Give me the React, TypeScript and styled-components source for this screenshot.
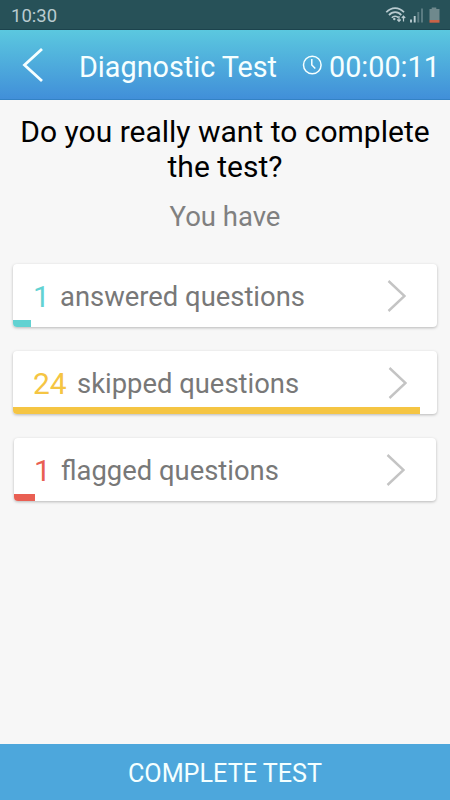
import React from 'react';
import styled, { createGlobalStyle } from 'styled-components';

const GlobalStyle = createGlobalStyle`
  * { box-sizing: border-box; }
  body { margin: 0; font-family: Roboto, "Liberation Sans", sans-serif; background: #f7f7f7; }
`;

const Screen = styled.div`
  display: flex;
  flex-direction: column;
  width: 450px;
  height: 800px;
  background: #f7f7f7;
  overflow: hidden;
`;

const StatusBar = styled.div`
  display: flex;
  justify-content: space-between;
  height: 30px;
  padding-left: 11px;
  background: #275158;
  border-bottom: 1px solid #1c434d;
`;

const Clock = styled.span`
  font-size: 18.5px;
  line-height: 32px;
  color: #b9cbd0;
`;

const StatusIcons = styled.svg`
  display: block;
  width: 75px;
  height: 30px;
`;

const Header = styled.header`
  display: flex;
  align-items: center;
  height: 70px;
  background: linear-gradient(#5bc8df, #418fd9);
  border-bottom: 1px solid #3382c5;
  color: #f6ffff;
`;

const BackIcon = styled.svg`
  width: 24px;
  height: 36px;
  margin-left: 21px;
  margin-top: 1px;
`;

const Title = styled.h1`
  margin: 4px 0 0 34px;
  width: 223px;
  font-size: 28.75px;
  font-weight: 400;
  white-space: nowrap;
`;

const TimerIcon = styled.svg`
  width: 20px;
  height: 20px;
  margin-top: 1px;
`;

const Timer = styled.span`
  margin: 4px 0 0 7px;
  font-size: 28.75px;
`;

const Question = styled.h2`
  margin: 14px 0 0;
  font-size: 30px;
  line-height: 35px;
  font-weight: 400;
  text-align: center;
  color: #000;
`;

const Subtitle = styled.p`
  margin: 16px 0 0;
  font-size: 27.5px;
  line-height: 34px;
  text-align: center;
  color: #808080;
`;

const List = styled.main`
  display: flex;
  flex-direction: column;
  flex: 1;
  gap: 24px;
  padding-top: 30px;
`;

const Card = styled.div<{ $inset: number }>`
  display: flex;
  flex-direction: column;
  height: 63px;
  margin: 0 ${(p) => p.$inset}px;
  background: #fff;
  border-radius: 4px;
  box-shadow: 0 1px 3px rgba(0, 0, 0, 0.26);
  overflow: hidden;
`;

const CardRow = styled.div<{ $end: number }>`
  display: flex;
  align-items: center;
  height: 56px;
  padding: 0 ${(p) => p.$end}px 0 20px;
`;

const Count = styled.span<{ $color: string; $width: number }>`
  width: ${(p) => p.$width}px;
  margin-top: 10px;
  font-size: 30px;
  line-height: 34px;
  color: ${(p) => p.$color};
`;

const Label = styled.span`
  flex: 1;
  margin-top: 10px;
  font-size: 27.4px;
  line-height: 34px;
  white-space: nowrap;
  color: #787878;
`;

const Chevron = styled.svg`
  width: 20px;
  height: 34px;
  margin-top: 7px;
`;

const Progress = styled.div<{ $color: string; $width: number }>`
  width: ${(p) => p.$width}px;
  height: 7px;
  background: ${(p) => p.$color};
`;

const CompleteButton = styled.button`
  height: 56px;
  padding: 2px 0 0;
  border: 0;
  background: #4da7dc;
  color: #f4ffff;
  font: 400 25.2px Roboto, sans-serif;
`;

const items = [
  { count: 1, label: 'answered questions', color: '#62d2d2', bar: 18, inset: 13, countWidth: 27, end: 30 },
  { count: 24, label: 'skipped questions', color: '#f5c543', bar: 407, inset: 13, countWidth: 44, end: 29 },
  { count: 1, label: 'flagged questions', color: '#e95f53', bar: 21, inset: 14, countWidth: 27, end: 30 },
];

export default function App() {
  return (
    <Screen>
      <GlobalStyle />
      <StatusBar>
        <Clock>10:30</Clock>
        <StatusIcons viewBox="0 0 75 30" fill="none">
          <g stroke="#b9cbd0" strokeWidth="1.7">
            <path d="M11.3 12.3C16.3 6.6 24 6.6 29 12.3" />
            <path d="M14 15.1C17.3 11.2 23 11.2 26.3 15.1" />
            <path d="M16.8 17.8C18.6 15.7 21.6 15.7 23.4 17.8" />
          </g>
          <circle cx="19.3" cy="19" r="1.2" fill="#b9cbd0" />
          <path d="M24 16v5M22.3 19.5l1.7 1.8 1.7-1.8M28.5 21.5v-5M26.8 18l1.7-1.8 1.7 1.8" stroke="#b9cbd0" strokeWidth="1.2" />
          <path d="M36 19.5v3M39.7 16v6.5" stroke="#b9cbd0" strokeWidth="1.9" />
          <path d="M43.3 12v10.5M47 8.5v14" stroke="#5e7e84" strokeWidth="1.9" />
          <path d="M54.5 9h2.2V7.5h4.6V9h3.2v11h-10z" fill="#6f898d" />
          <path d="M54.5 20h10v2.7h-10z" fill="#c86348" />
        </StatusIcons>
      </StatusBar>
      <Header>
        <BackIcon viewBox="0 0 24 36" fill="none" stroke="currentColor" strokeWidth="2.8">
          <path d="M21 2L3.5 18L21 34" />
        </BackIcon>
        <Title>Diagnostic Test</Title>
        <TimerIcon viewBox="0 0 20 20" fill="none" stroke="currentColor" strokeWidth="1.5">
          <circle cx="10.3" cy="10" r="8.8" />
          <path d="M9.8 4v6l3.5 3.5" />
        </TimerIcon>
        <Timer>00:00:11</Timer>
      </Header>
      <Question>Do you really want to complete<br />the test?</Question>
      <Subtitle>You have</Subtitle>
      <List>
        {items.map((item) => (
          <Card key={item.label} $inset={item.inset}>
            <CardRow $end={item.end}>
              <Count $color={item.color} $width={item.countWidth}>{item.count}</Count>
              <Label>{item.label}</Label>
              <Chevron viewBox="0 0 20 34" fill="none" stroke="#c4c4c4" strokeWidth="2.4">
                <path d="M1.5 2L17.5 17L1.5 32" />
              </Chevron>
            </CardRow>
            <Progress $color={item.color} $width={item.bar} />
          </Card>
        ))}
      </List>
      <CompleteButton>COMPLETE TEST</CompleteButton>
    </Screen>
  );
}
